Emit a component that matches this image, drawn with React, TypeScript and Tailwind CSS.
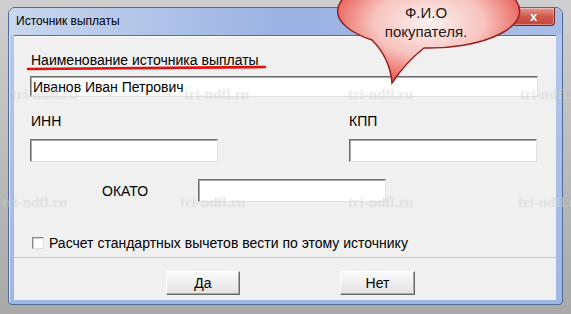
import React from "react";

const Field = ({ w, h, children }: { w: string; h: string; children?: React.ReactNode }) => (
  <div
    className={`${w} ${h} bg-white border border-t-[#6e6e6e] border-l-[#6e6e6e] border-r-[#e2e2e2] border-b-[#e2e2e2] shadow-[inset_1px_1px_0_#a9a9a9] flex items-center pl-[2px]`}
  >
    {children}
  </div>
);

const Btn = ({ w, label }: { w: string; label: string }) => (
  <div
    className={`${w} h-[24px] flex items-center justify-center bg-gradient-to-b from-[#fbfbfb] to-[#e2e2e2] border border-t-[#ffffff] border-l-[#ffffff] border-r-[#6a6a6a] border-b-[#6a6a6a] shadow-[inset_-1px_-1px_0_#a8a8a8]`}
  >
    {label}
  </div>
);

const marks = [
  { x: 12, y: 87 },
  { x: 184, y: 87 },
  { x: 348, y: 87 },
  { x: 520, y: 87 },
  { x: 2, y: 195 },
  { x: 180, y: 195 },
  { x: 348, y: 195 },
  { x: 518, y: 195 },
];

export default function App() {
  return (
    <div className="relative w-[571px] h-[314px] overflow-hidden bg-gradient-to-b from-[#cfcfcf] to-[#a9a9a9] font-['Liberation_Sans',Arial,sans-serif] text-[14px] leading-[16px] text-black">
      <div className="pt-[7px] pl-[8px]">
        <div className="w-[555px] h-[298px] rounded-t-[7px] rounded-b-[4px] border border-[#4f6a96] bg-gradient-to-b from-[#b5c9ec] to-[#9fb7e4] flex flex-col shadow-[inset_1px_1px_0_#e6eefb]">
          {/* title bar */}
          <div className="h-[27px] flex items-start justify-between bg-gradient-to-r from-[#c9d7ee] via-[#9bb1e2] to-[#a8bde6] rounded-t-[6px]">
            <div className="pl-[7px] pt-[6px] text-[12px] leading-[14px] text-black">Источник выплаты</div>
            <div className="mr-[7px] w-[43px] h-[18px] rounded-b-[4px] border border-t-0 border-[#6b2a26] bg-gradient-to-b from-[#e59a90] via-[#d0574d] to-[#c2463c] flex items-center justify-center text-white font-bold text-[13px] leading-[13px] shadow-[inset_0_0_0_1px_rgba(255,255,255,0.35)]">
              x
            </div>
          </div>
          {/* body */}
          <div className="flex pl-[5px]">
            <div className="w-[542px] h-[265px] bg-[#f0f0f0] border-t border-[#5b6f93] flex flex-col">
              {/* panel */}
              <div className="h-[222px] border-t border-b border-t-white border-b-[#c8c8c8] flex flex-col">
                <div className="mt-[15px] ml-[17px]">Наименование источника выплаты</div>
                <div className="mt-[8px] ml-[16px]">
                  <Field w="w-[508px]" h="h-[21px]">Иванов Иван Петрович</Field>
                </div>
                <div className="mt-[16px] ml-[16px] flex">
                  <div className="w-[319px] pl-[1px]">ИНН</div>
                  <div>КПП</div>
                </div>
                <div className="mt-[10px] ml-[16px] flex">
                  <div className="w-[319px]">
                    <Field w="w-[188px]" h="h-[23px]" />
                  </div>
                  <Field w="w-[188px]" h="h-[23px]" />
                </div>
                <div className="mt-[17px] ml-[88px] flex items-center">
                  <div className="w-[96px]">ОКАТО</div>
                  <Field w="w-[188px]" h="h-[23px]" />
                </div>
                <div className="mt-[33px] ml-[18px] flex items-center h-[16px]">
                  <div className="w-[12px] h-[12px] bg-white border border-t-[#8a8a8a] border-l-[#8a8a8a] border-r-[#e0e0e0] border-b-[#e0e0e0] shadow-[inset_1px_1px_0_#cfcfcf]" />
                  <div className="ml-[5px]">Расчет стандартных вычетов вести по этому источнику</div>
                </div>
              </div>
              {/* buttons */}
              <div className="pt-[13px] ml-[152px] flex gap-[100px]">
                <Btn w="w-[74px]" label="Да" />
                <Btn w="w-[75px]" label="Нет" />
              </div>
            </div>
          </div>
        </div>
      </div>

      {/* watermarks */}
      {marks.map((m, i) => (
        <div
          key={i}
          className="absolute whitespace-nowrap pointer-events-none font-['Liberation_Serif',serif] font-bold text-[15px] leading-[15px] text-white/30 [text-shadow:0_0_1px_rgba(140,140,140,0.25)]"
          style={{ left: m.x, top: m.y }}
        >
          tri-ndfl.ru
        </div>
      ))}

      {/* red underline annotation */}
      <svg className="absolute left-[24px] top-[62px]" width="248" height="12" viewBox="0 0 248 12">
        <path d="M4 7 L241 5" stroke="#e0120f" strokeWidth="2.6" strokeLinecap="round" fill="none" />
      </svg>

      {/* speech bubble */}
      <svg className="absolute left-[320px] top-[-30px]" width="220" height="125" viewBox="0 0 220 125">
        <defs>
          <radialGradient id="bub" cx="50%" cy="45%" r="60%">
            <stop offset="0" stopColor="#fdf2f0" />
            <stop offset="0.5" stopColor="#f7c4bf" />
            <stop offset="0.85" stopColor="#ea6d66" />
            <stop offset="1" stopColor="#d8393a" />
          </radialGradient>
        </defs>
        <path
          d="M52 70 A91 37 0 1 1 104 78 Q86 92 72 113 Q70 88 52 70 Z"
          fill="url(#bub)"
          stroke="#9a1f1f"
          strokeWidth="1.5"
        />
      </svg>
      <div className="absolute left-[376px] top-[3px] w-[100px] text-center text-[15px] leading-[19px] text-[#1a1a1a]">
        <div>Ф.И.О</div>
        <div>покупателя.</div>
      </div>
    </div>
  );
}
